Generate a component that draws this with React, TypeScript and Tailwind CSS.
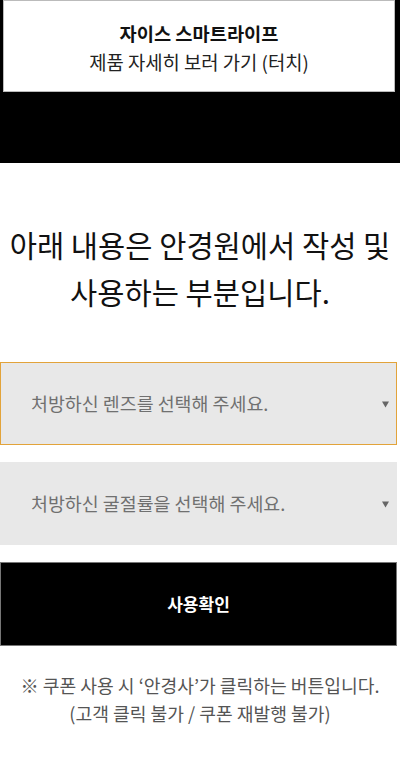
import React from 'react';

const font = { fontFamily: '"Noto Sans CJK KR", "Noto Sans", sans-serif' };

function SelectBox({ label, active }: { label: string; active?: boolean }) {
  return (
    <div
      className={`flex h-[83px] w-[397px] items-center justify-between bg-[#e8e8e8] pl-[30px] pr-[7px] ${
        active ? 'border border-[#e2a33a]' : 'border border-[#e8e8e8]'
      }`}
    >
      <span className="text-[18.4px] text-[#707070]">{label}</span>
      <svg width="7" height="7" viewBox="0 0 7 7" className="mt-[1px]">
        <path d="M0 0.5 H7 L3.5 6.5 Z" fill="#666" />
      </svg>
    </div>
  );
}

export default function App() {
  return (
    <div className="min-h-[766px] w-[400px] bg-white" style={font}>
      <div className="h-[163px] bg-black pl-[3px] pr-[5px]">
        <div className="flex h-[92px] flex-col items-center justify-center border border-[#bbb] bg-white pt-[2px]">
          <div className="text-[18.7px] font-bold leading-[29px] text-[#111]">자이스 스마트라이프</div>
          <div className="text-[18.8px] leading-[29px] text-[#222]">제품 자세히 보러 가기 (터치)</div>
        </div>
      </div>

      <div className="pt-[58px] text-center text-[29.6px] leading-[47px] text-[#111]">
        <div>아래 내용은 안경원에서 작성 및</div>
        <div>사용하는 부분입니다.</div>
      </div>

      <div className="mt-[47px] flex flex-col gap-[17px]">
        <SelectBox label="처방하신 렌즈를 선택해 주세요." active />
        <SelectBox label="처방하신 굴절률을 선택해 주세요." />
        <button className="h-[84px] w-[397px] border border-[#777] bg-black text-[17px] font-bold text-white">
          사용확인
        </button>
      </div>

      <div className="pt-[25px] text-center text-[18.2px] leading-[28px] text-[#555]">
        <div>※ 쿠폰 사용 시 ‘안경사’가 클릭하는 버튼입니다.</div>
        <div>(고객 클릭 불가 / 쿠폰 재발행 불가)</div>
      </div>
    </div>
  );
}
